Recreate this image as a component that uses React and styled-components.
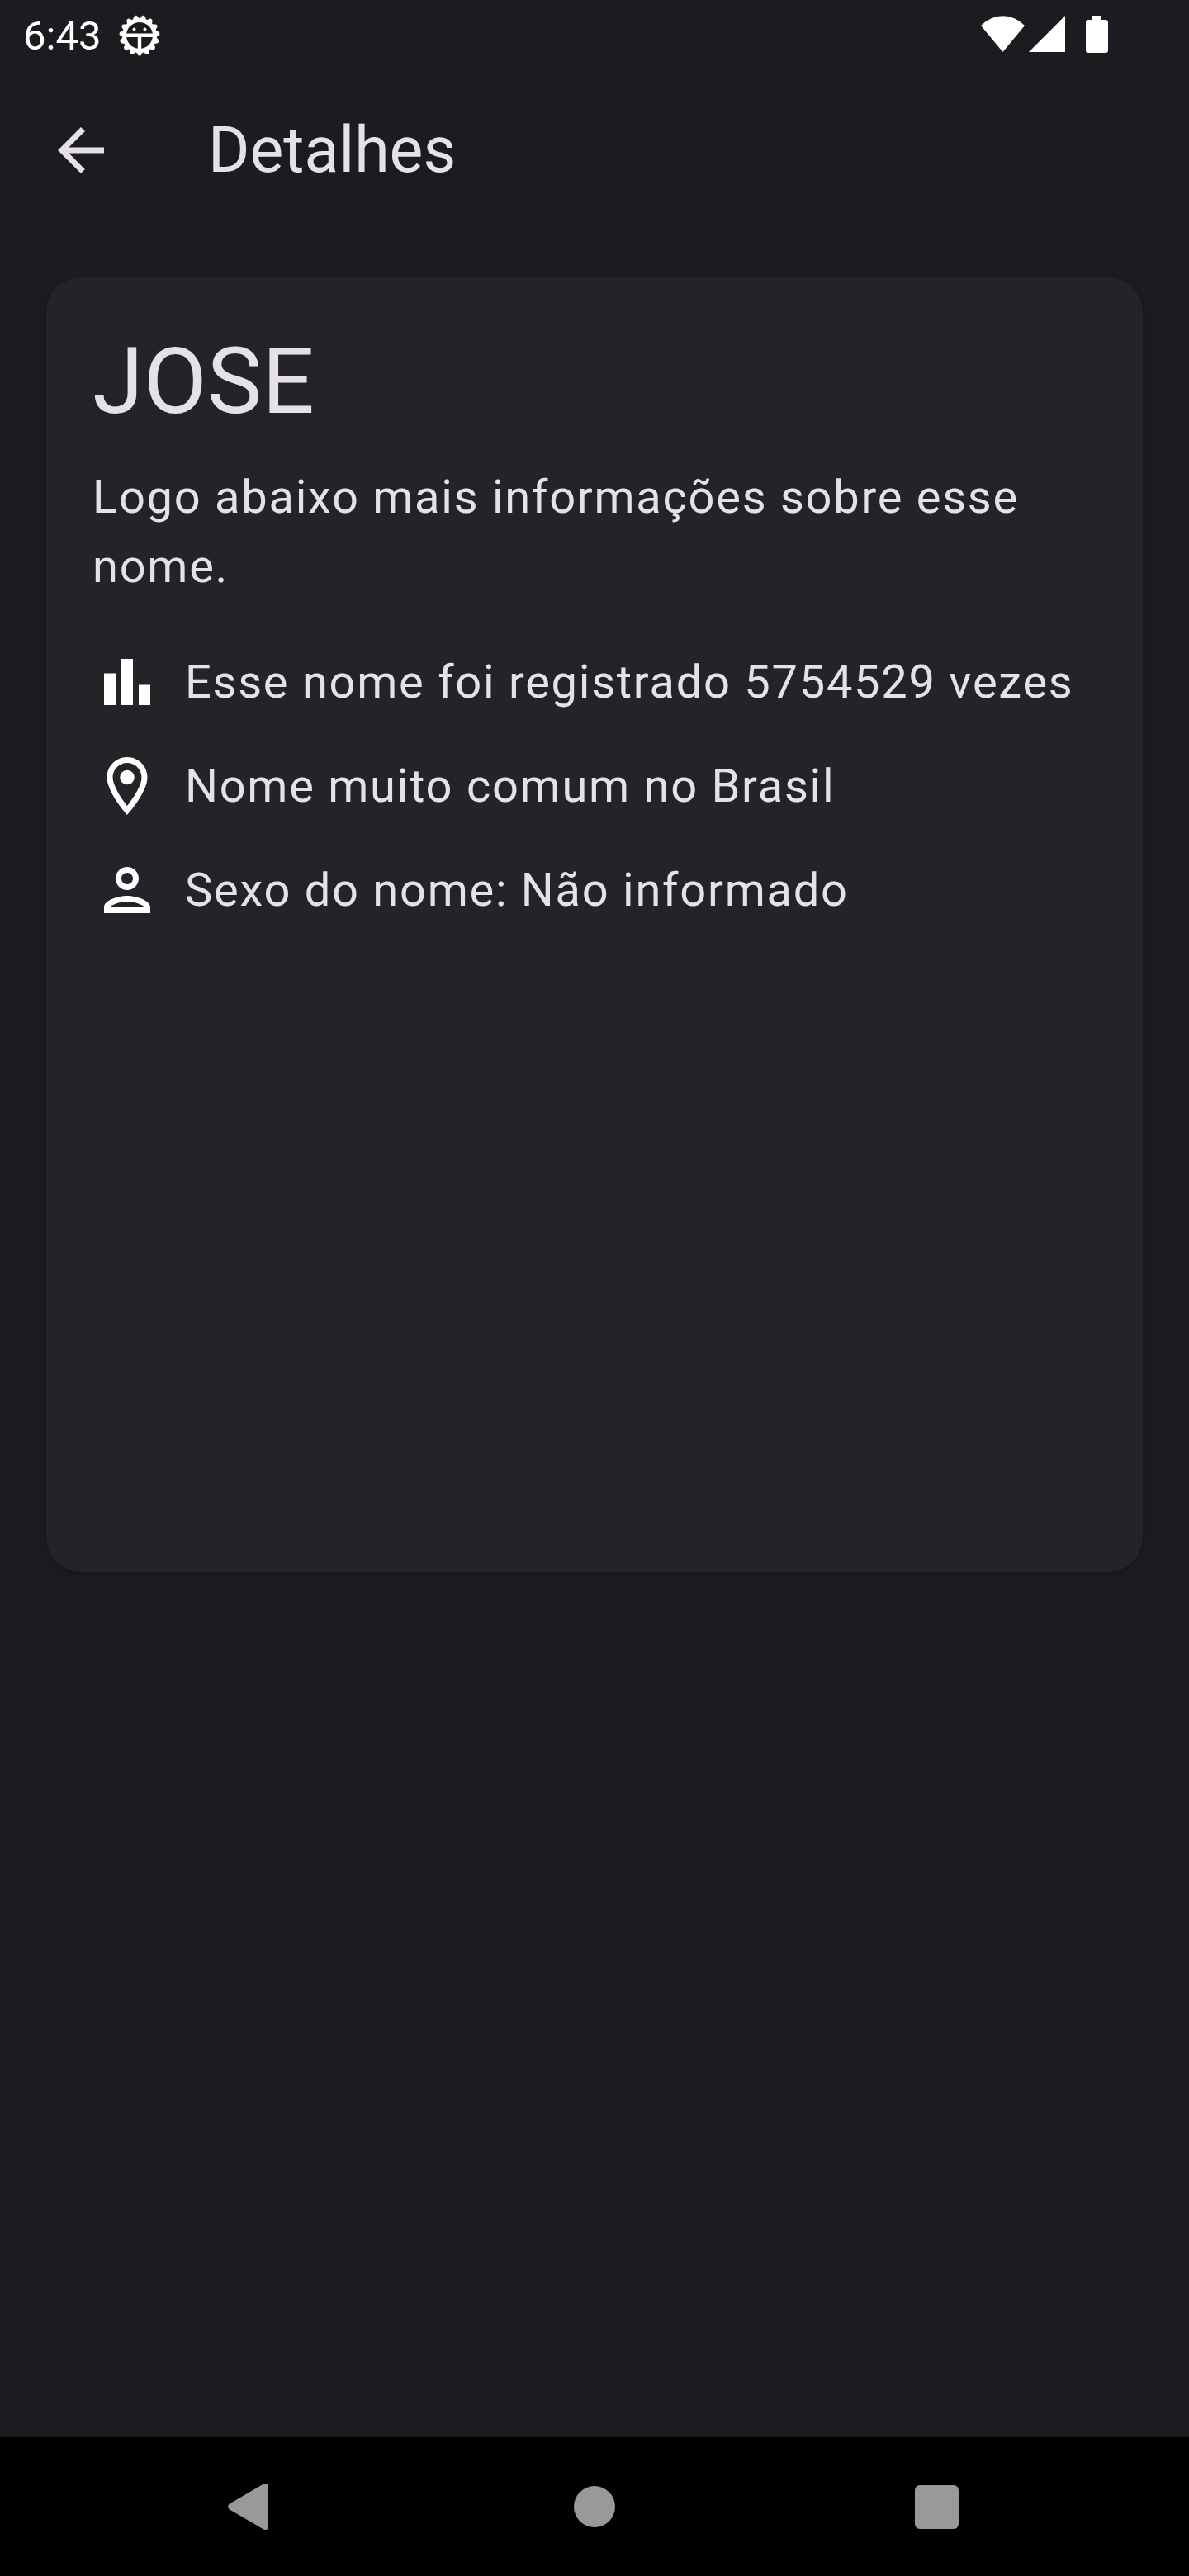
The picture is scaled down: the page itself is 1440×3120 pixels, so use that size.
import React from "react";
import styled, { createGlobalStyle } from "styled-components";

const GlobalStyle = createGlobalStyle`
  *, *::before, *::after { box-sizing: border-box; }
  body {
    margin: 0;
    background: #1c1b1f;
    color: #e6e1e5;
    font-family: Roboto, "Noto Sans", sans-serif;
  }
`;

const Screen = styled.div`
  display: flex;
  flex-direction: column;
  min-height: 100vh;
`;

const StatusBar = styled.div`
  display: flex;
  align-items: center;
  justify-content: space-between;
  height: 88px;
  padding: 0 98px 0 28px;
  color: #ffffff;
`;

const StatusGroup = styled.div`
  display: flex;
  align-items: center;
  gap: ${({ $gap }) => $gap}px;
`;

const Time = styled.time`
  font-size: 49px;
  line-height: 56px;
`;

const Icon = styled.svg`
  display: block;
  flex: none;
  width: ${({ $width }) => $width}px;
  height: ${({ $height }) => $height}px;
  fill: currentColor;
`;

const AppBar = styled.header`
  display: flex;
  align-items: center;
  gap: 112px;
  height: 188px;
  padding: 0 56px;
`;

const IconButton = styled.button`
  display: flex;
  padding: 0;
  border: 0;
  background: none;
  color: inherit;
`;

const Title = styled.h1`
  margin: 0;
  font-size: 77px;
  font-weight: 400;
  line-height: 96px;
`;

const Content = styled.main`
  flex: 1;
  padding: 60px 56px;
`;

const Card = styled.article`
  min-height: 1568px;
  padding: 56px;
  border-radius: 42px;
  background: #242328;
  box-shadow: 0 2px 6px rgba(0, 0, 0, 0.25);
`;

const Name = styled.h2`
  margin: 0 0 28px;
  font-size: 112px;
  font-weight: 400;
  line-height: 140px;
`;

const BodyText = styled.p`
  margin: 0;
  font-size: 56px;
  line-height: 84px;
  letter-spacing: 0.031em;
`;

const Facts = styled.ul`
  display: flex;
  flex-direction: column;
  gap: 42px;
  margin: 56px 0 0;
  padding: 0;
  list-style: none;
`;

const Fact = styled.li`
  display: flex;
  gap: 28px;
`;

const FactIcon = styled(Icon)`
  color: #ffffff;
`;

const NavBar = styled.nav`
  display: grid;
  grid-template-columns: repeat(3, 1fr);
  height: 168px;
  padding: 0 98px;
  background: #000000;
`;

const NavButton = styled(IconButton)`
  align-items: center;
  justify-content: center;
  color: #999999;
`;

const TEETH = Array.from({ length: 15 }, (_, i) => i * 24);

function DebugIcon() {
  return (
    <Icon $width={50} $height={52} viewBox="0 0 50 52" aria-hidden="true">
      {TEETH.map((angle) => (
        <path
          key={angle}
          d="M20.5 44 L22.6 48 Q23.2 49.6 25 49.6 Q26.8 49.6 27.4 48 L29.5 44 Z"
          transform={`rotate(${angle} 25 25)`}
        />
      ))}
      <path
        fillRule="evenodd"
        d="M25 4a21 21 0 1 0 0 42a21 21 0 1 0 0-42z M9.2 22.5a16 16 0 0 1 31.6 0z M9.2 27H22.8V40.8A16 16 0 0 1 9.2 27z M40.8 27H27.2V40.8A16 16 0 0 0 40.8 27z"
      />
      <circle cx="18.5" cy="17.5" r="2" />
      <circle cx="31.5" cy="17.5" r="2" />
    </Icon>
  );
}

const facts = [
  {
    text: "Esse nome foi registrado 5754529 vezes",
    path: "M4 9h4v11H4zM16 13h4v7h-4zM10 4h4v16h-4z",
  },
  {
    text: "Nome muito comum no Brasil",
    path: "M12 2C8.13 2 5 5.13 5 9c0 5.25 7 13 7 13s7-7.75 7-13c0-3.87-3.13-7-7-7zM7 9c0-2.76 2.24-5 5-5s5 2.24 5 5c0 2.88-2.88 7.19-5 9.88C9.92 16.21 7 11.85 7 9zM12 6.5a2.5 2.5 0 1 0 0 5a2.5 2.5 0 1 0 0-5z",
  },
  {
    text: "Sexo do nome: Não informado",
    path: "M12 6c1.1 0 2 .9 2 2s-.9 2-2 2-2-.9-2-2 .9-2 2-2m0 10c2.7 0 5.8 1.29 6 2H6c.23-.72 3.31-2 6-2m0-12C9.79 4 8 5.79 8 8s1.79 4 4 4 4-1.79 4-4-1.79-4-4-4zm0 10c-2.67 0-8 1.34-8 4v2h16v-2c0-2.66-5.33-4-8-4z",
  },
];

export default function App() {
  return (
    <>
      <GlobalStyle />
      <Screen>
        <StatusBar>
          <StatusGroup $gap={22}>
            <Time>6:43</Time>
            <DebugIcon />
          </StatusGroup>
          <StatusGroup $gap={5}>
            <Icon $width={53} $height={50} viewBox="0 0 53 50" aria-hidden="true">
              <path d="M0 12A36 36 0 0 1 53 12L26.5 44z" />
            </Icon>
            <Icon $width={64} $height={50} viewBox="0 0 64 50" aria-hidden="true">
              <path d="M44 0V44H0z" />
            </Icon>
            <Icon $width={27} $height={50} viewBox="0 0 27 50" aria-hidden="true">
              <path d="M8 0H19V5H24a3 3 0 0 1 3 3V42a3 3 0 0 1-3 3H3a3 3 0 0 1-3-3V8a3 3 0 0 1 3-3H8z" />
            </Icon>
          </StatusGroup>
        </StatusBar>

        <AppBar>
          <IconButton type="button" aria-label="Voltar">
            <Icon $width={84} $height={84} viewBox="0 0 24 24" aria-hidden="true">
              <path d="M20 11H7.83l5.59-5.59L12 4l-8 8 8 8 1.41-1.41L7.83 13H20v-2z" />
            </Icon>
          </IconButton>
          <Title>Detalhes</Title>
        </AppBar>

        <Content>
          <Card>
            <Name>JOSE</Name>
            <BodyText>Logo abaixo mais informações sobre esse nome.</BodyText>
            <Facts>
              {facts.map(({ text, path }) => (
                <Fact key={text}>
                  <FactIcon $width={84} $height={84} viewBox="0 0 24 24" aria-hidden="true">
                    <path fillRule="evenodd" d={path} />
                  </FactIcon>
                  <BodyText as="span">{text}</BodyText>
                </Fact>
              ))}
            </Facts>
          </Card>
        </Content>

        <NavBar>
          <NavButton type="button" aria-label="Voltar">
            <Icon $width={58} $height={58} viewBox="0 0 58 58" aria-hidden="true">
              <path d="M1.6 25.8L43.2 1.6Q48.6 -0.4 49 4.5V53.5Q48.6 58.4 43.2 56.4L1.6 32.2Q-1.4 29 1.6 25.8z" />
            </Icon>
          </NavButton>
          <NavButton type="button" aria-label="Início">
            <Icon $width={50} $height={50} viewBox="0 0 50 50" aria-hidden="true">
              <circle cx="25" cy="25" r="25" />
            </Icon>
          </NavButton>
          <NavButton type="button" aria-label="Recentes">
            <Icon $width={53} $height={53} viewBox="0 0 53 53" aria-hidden="true">
              <rect width="53" height="53" rx="6" />
            </Icon>
          </NavButton>
        </NavBar>
      </Screen>
    </>
  );
}
